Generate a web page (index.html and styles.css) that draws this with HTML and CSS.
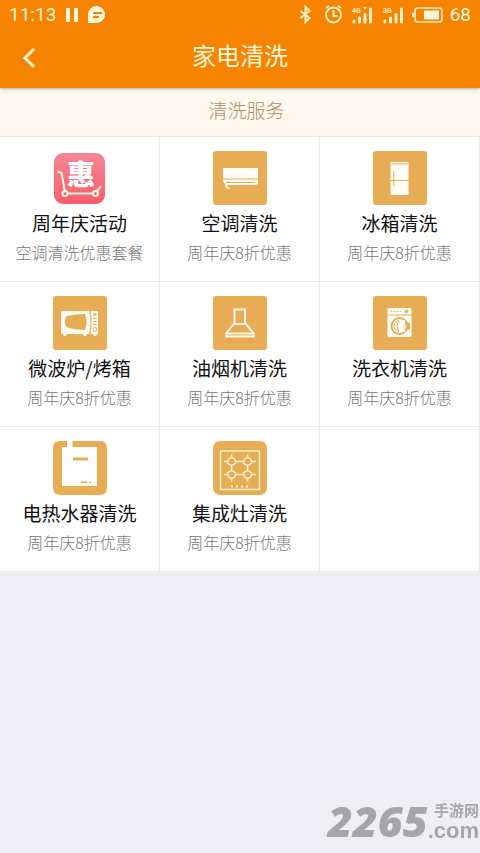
FILE: index.html
```html
<!DOCTYPE html>
<html lang="zh-CN">
<head>
<meta charset="utf-8">
<meta name="viewport" content="width=device-width, initial-scale=1">
<title>家电清洗</title>
<link rel="stylesheet" href="styles.css">
</head>
<body>
<header class="header">
  <div class="status">
    <span class="status-text">11:13</span>
    <svg class="status-left" width="42" height="20" viewBox="0 0 42 20" aria-hidden="true">
      <path class="ink" d="M2 3h4v14H2zM10 3h4v14h-4zM24 18v-9a8.500 8.500 0 1 1 8.500 9z"/>
      <path class="cut" d="M29 8h9M29 12h6"/>
    </svg>
    <svg class="status-right" width="146" height="20" viewBox="0 0 146 20" aria-hidden="true">
      <path class="line" d="M2.500 6l9 7-4 4V2l4 4-9 7"/>
      <circle class="line" cx="35.500" cy="10" r="7.500"/>
      <path class="line" d="M35.500 5.500V11h4M28 3l3-2M40 1l3 2"/>
      <path class="bars" d="M56 16v1M61.500 13v4M67 9.500v7.500M72.500 4v13M87 16v1M92.500 13v4M98 9.500v7.500M103.500 4v13"/>
      <text class="net" x="54" y="8">4G</text>
      <text class="net" x="85" y="8">3G</text>
      <path class="ink" d="M65 2h4l-2 3z"/>
      <rect class="case" x="117" y="3" width="27" height="14" rx="3"/>
      <path class="ink" d="M114 8h2v4h-2zM126 5.500h15v9h-15z"/>
    </svg>
    <span class="status-text">68</span>
  </div>
  <div class="bar">
    <button class="back" type="button" aria-label="返回">
      <svg width="14" height="22" viewBox="0 0 14 22"><path d="M12 2L3 11l9 9"/></svg>
    </button>
    <h1 class="title">家电清洗</h1>
  </div>
</header>
<main>
  <h2 class="section">清洗服务</h2>
  <nav class="grid">
    <a class="cell" href="#promo">
      <svg class="icon" viewBox="0 0 54 54" aria-hidden="true">
        <defs><linearGradient id="pink" x1="0" y1="0" x2="0" y2="1"><stop offset="0" stop-color="#f58791"/><stop offset="1" stop-color="#f95e6c"/></linearGradient></defs>
        <rect x="1" y="2" width="51" height="51" rx="9" fill="url(#pink)"/>
        <text class="hui" x="28" y="34">惠</text>
        <path class="w2" d="M4.500 20.500l4 1.500 3.500 19M15 42.500h25M44 40l4-5"/>
        <circle class="w2" cx="12" cy="42.500" r="2.500"/><circle class="w2" cx="42.500" cy="42.500" r="2.500"/>
      </svg>
      <span class="name">周年庆活动</span><span class="note">空调清洗优惠套餐</span>
    </a>
    <a class="cell" href="#ac">
      <svg class="icon" viewBox="0 0 54 54" aria-hidden="true">
        <rect class="tile" width="54" height="54" rx="3"/>
        <path class="w" d="M11 17h33q1 0 1 1v13q0 3-3 3H14q0 3 3 3v1q-5 0-5-5l-2-3V18q0-1 1-1z"/>
        <path class="o1" d="M10 28h35M13 31.500h29"/>
      </svg>
      <span class="name">空调清洗</span><span class="note">周年庆8折优惠</span>
    </a>
    <a class="cell" href="#fridge">
      <svg class="icon" viewBox="0 0 54 54" aria-hidden="true">
        <rect class="tile" width="54" height="54" rx="3"/>
        <rect class="w" x="17.500" y="11" width="18" height="33" rx="1"/>
        <path class="o1" d="M18 13h17M17 29.500h19M20.800 20v15"/>
      </svg>
      <span class="name">冰箱清洗</span><span class="note">周年庆8折优惠</span>
    </a>
    <a class="cell" href="#microwave">
      <svg class="icon" viewBox="0 0 54 54" aria-hidden="true">
        <rect class="tile" width="54" height="54" rx="3"/>
        <path class="w" d="M9 15h27q3 12 0 23h-2l-1 2h-2l-1-2H14l-1 2h-2l-1-2H8V16q0-1 1-1zM37.500 15H44q1 0 1 1v22h-1l-1 2h-2l-1-2h-2.500q2-12 0-23z"/>
        <path class="tile" d="M14 20q9-2 18-2 3 8 0 16-9 0-16-2-4-1-4-6t2-6z"/>
        <path class="o2" d="M40 18.500h3.500"/><path class="o1" d="M40 22.500h3.500M40 25.500h3.500M40 28.500h3.500"/><circle class="o1" cx="42" cy="33.500" r="2"/>
      </svg>
      <span class="name">微波炉/烤箱</span><span class="note">周年庆8折优惠</span>
    </a>
    <a class="cell" href="#hood">
      <svg class="icon" viewBox="0 0 54 54" aria-hidden="true">
        <rect class="tile" width="54" height="54" rx="3"/>
        <path class="w2" d="M21.500 13.500h10.500V27l8.500 10v3.500h-27V37l8-10zM21.500 28H32M14 37.500h26"/>
      </svg>
      <span class="name">油烟机清洗</span><span class="note">周年庆8折优惠</span>
    </a>
    <a class="cell" href="#washer">
      <svg class="icon" viewBox="0 0 54 54" aria-hidden="true">
        <rect class="tile" width="54" height="54" rx="3"/>
        <rect class="w" x="14.500" y="12" width="24" height="29" rx="1"/>
        <path class="o1" d="M14 19h25"/><path class="o1 dots" d="M18 15.500h10"/><circle class="tile" cx="33.500" cy="15.500" r="1.800"/>
        <circle class="o2" cx="26.500" cy="30" r="8"/><circle class="o1" cx="26.500" cy="30" r="5.500"/>
        <path class="w" d="M26 24h6v12h-6z"/><path class="o1" d="M26 25q-4 5 0 10"/><path class="o2" d="M32 27.500h4v5h-4"/>
      </svg>
      <span class="name">洗衣机清洗</span><span class="note">周年庆8折优惠</span>
    </a>
    <a class="cell" href="#heater">
      <svg class="icon" viewBox="0 0 54 54" aria-hidden="true">
        <path class="tile" d="M7 0h7v6H9v39h35V6H19.500V0H47q7 0 7 7v40q0 7-7 7H7q-7 0-7-7V7q0-7 7-7z"/>
        <path class="tile" d="M20 16.500h15v3H20zM27.500 40.500h7v1.500h-7zM36 40.500h2v1.500h-2z"/>
      </svg>
      <span class="name">电热水器清洗</span><span class="note">周年庆8折优惠</span>
    </a>
    <a class="cell" href="#stove">
      <svg class="icon" viewBox="0 0 54 54" aria-hidden="true">
        <rect class="tile" width="54" height="54" rx="7"/>
        <rect class="w1" x="7.500" y="10" width="39" height="38.500"/>
        <path class="w1" d="M11 20.500h4M22 20.500h9M38 20.500h5M11 33.500h4M22 33.500h9M38 33.500h5M18.500 13v4M18.500 24v6M18.500 37v4M34.500 13v4M34.500 24v6M34.500 37v4"/>
        <circle class="w1" cx="18.500" cy="20.500" r="3.800"/><circle class="w1" cx="34.500" cy="20.500" r="3.800"/><circle class="w1" cx="18.500" cy="33.500" r="3.800"/><circle class="w1" cx="34.500" cy="33.500" r="3.800"/>
        <path class="w" d="M18 44.500h2v2h-2zM23 44.500h2v2h-2zM28 44.500h2v2h-2zM33 44.500h2v2h-2z"/>
      </svg>
      <span class="name">集成灶清洗</span><span class="note">周年庆8折优惠</span>
    </a>
    <div class="cell"></div>
  </nav>
</main>
<div class="mark"><span class="mark-num">2265</span><span class="mark-side"><span class="mark-cn">手游网</span><span class="mark-com">.com</span></span></div>
</body>
</html>
```
FILE: styles.css
```css
* { box-sizing: border-box; }
body {
  margin: 0;
  min-height: 100vh;
  background: #f0eef5;
  color: #111;
  font-family: "Noto Sans CJK SC", sans-serif;
}
.header {
  position: relative;
  background: #f68400;
  color: #fff5d8;
  box-shadow: 0 1px 3px rgba(130, 80, 20, .45);
}
.status {
  display: flex;
  align-items: center;
  height: 30px;
  padding: 0 9px;
}
.status-text {
  font: 400 19px/30px Roboto, sans-serif;
}
.status-left { margin-left: 8px; }
.status-right { margin-left: auto; margin-right: 6px; }
.ink { fill: #fff5d8; }
.cut { fill: none; stroke: #f68400; stroke-width: 2; }
.line { fill: none; stroke: #fff0c8; stroke-width: 2; }
.bars { stroke: #fff0c8; stroke-width: 3; stroke-linecap: round; }
.net { font: 700 7px Roboto, sans-serif; fill: #fff0c8; }
.case { fill: none; stroke: #fff0c8; stroke-width: 1.5; }
.bar {
  display: grid;
  grid-template-columns: 60px 1fr 60px;
  align-items: center;
  height: 58px;
  padding-bottom: 8px;
}
.back {
  display: flex;
  align-items: center;
  height: 44px;
  margin-top: 6px;
  padding: 0 0 0 22px;
  border: 0;
  background: none;
}
.back path { fill: none; stroke: #fff0c8; stroke-width: 3; }
.title {
  margin: 0;
  text-align: center;
  font-size: 24px;
  font-weight: 400;
  line-height: 46px;
}
.section {
  height: 48px;
  margin: 0;
  padding-left: 13px;
  background: #fef8ee;
  color: #b58c64;
  text-align: center;
  font-size: 19px;
  font-weight: 300;
  line-height: 43px;
}
.grid {
  display: grid;
  grid-template-columns: repeat(3, 1fr);
  grid-auto-rows: 145px;
  border-top: 1px solid #eee4dc;
}
.cell {
  display: flex;
  flex-direction: column;
  align-items: center;
  padding-top: 14px;
  border-right: 1px solid #e9e9eb;
  border-bottom: 1px solid #e9e9eb;
  background: #fff;
  color: #111;
  text-decoration: none;
}
.icon { width: 54px; height: 54px; }
.name { margin-top: 4px; font-size: 19px; line-height: 28px; }
.note { margin-top: 3px; color: #777; font-size: 16px; font-weight: 300; line-height: 24px; }
.tile { fill: #e8ad54; }
.w { fill: #fffdf5; }
.w1, .w2, .o1, .o2 { fill: none; }
.w1 { stroke: #fff3d2; stroke-width: 1.5; }
.w2 { stroke: #fff7e6; stroke-width: 2; }
.o1 { stroke: #e8ad54; stroke-width: 1; }
.o2 { stroke: #e8ad54; stroke-width: 2; }
.dots { stroke-dasharray: 1.5 1.5; }
.hui { font-size: 28px; font-weight: 900; fill: #fff; text-anchor: middle; }
.mark {
  position: fixed;
  right: 1px;
  bottom: 10px;
  display: flex;
  align-items: center;
  color: #a7a5aa;
}
.mark-num { font: italic 800 43px/44px "Open Sans", sans-serif; }
.mark-side { display: flex; flex-direction: column; align-items: flex-end; }
.mark-cn { font-size: 15px; font-weight: 700; line-height: 20px; }
.mark-com { font: 700 22px/22px "Liberation Sans", sans-serif; }
```
